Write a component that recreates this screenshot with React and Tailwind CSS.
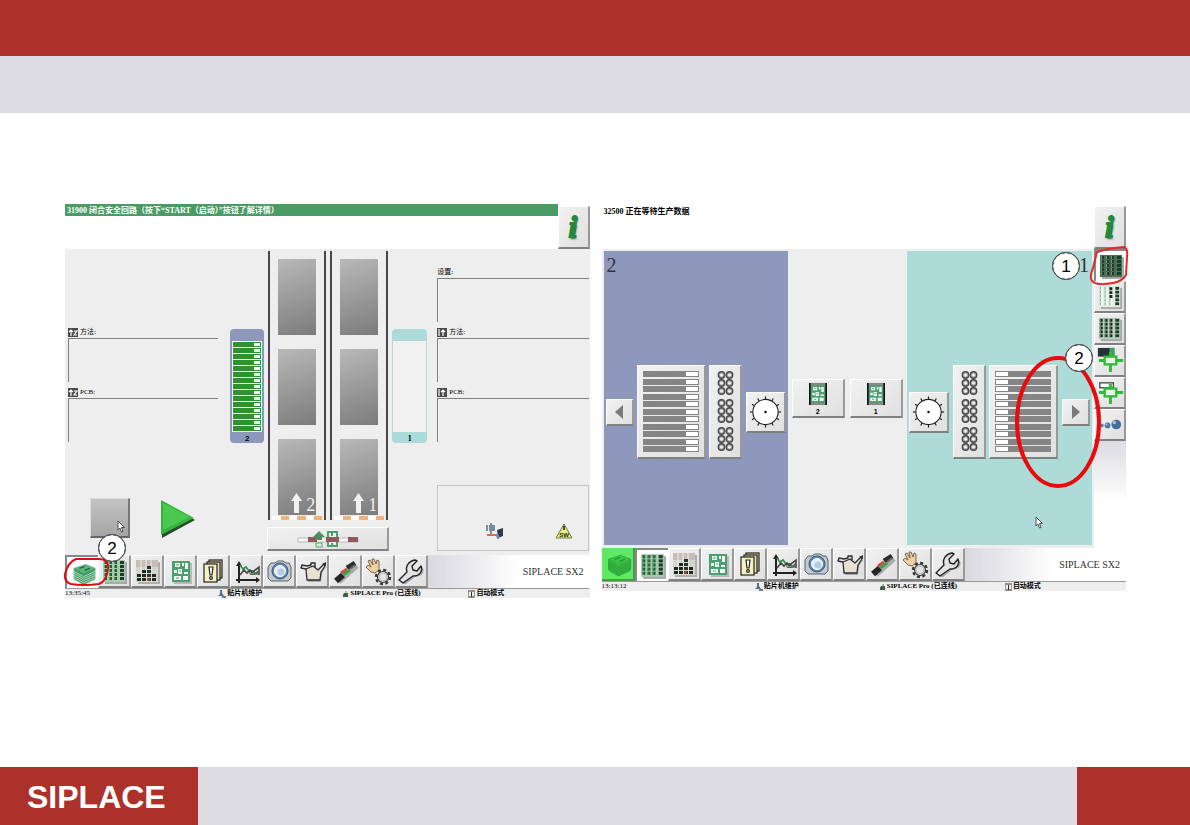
/* ---------- Toolbar icons ---------- */

function StackIcon({ active }) {
    return (
        <svg viewBox="1 1 30 30" className="size-full">
            {[20, 18, 16, 14, 12].map((y) => (
                <path
                    key={y}
                    d={`M7 ${y} L19 ${y - 4} L29 ${y} L28 ${y + 3} L17 ${y + 8} L8 ${y + 3} Z`}
                    fill={active ? "#34b440" : "#3f9b62"}
                    stroke={active ? "#2ba638" : "#c5e4cf"}
                    strokeWidth="0.8"
                />
            ))}
            <path d="M9 12 L19 8 L28 12 L17 17 Z" fill={active ? "#3dbf4a" : "#5fb27c"} />
            <path d="M13 12 l5 -2 M18 14 l5 -2" stroke={active ? "#239a31" : "#1f6b3c"} strokeWidth="1.4" />
        </svg>
    );
}

function GridIcon({ variant = "green" }) {
    const cols = [6, 11, 16];
    const rows = [6, 10, 14, 18, 22];
    const back = { green: "#a9c9ae", dark: "#4d6b56", light: "#e4ebe4", mono: "#b7cfbc" }[variant];
    const cell = { green: "#245c35", dark: "#1f3b29", light: "#fff", mono: "#1d1d1d" }[variant];
    return (
        <svg viewBox="1 1 30 30" className="size-full">
            <rect x="7" y="7" width="22" height="22" fill="#a9a9a9" />
            <rect x="5" y="5" width="22" height="22" fill={back} />
            {cols.map((x) =>
                rows.map((y) => (
                    <g key={`${x}-${y}`}>
                        <rect x={x} y={y} width="3" height="3" fill={cell} />
                        <rect x={x} y={y} width="1" height="3" fill="#56a56b" />
                    </g>
                ))
            )}
            {rows.map((y) => (
                <rect key={y} x="22" y={y} width="4" height="3" fill="#173f25" />
            ))}
            {variant === "dark" && <path d="M15 6 v20" stroke="#6a3a38" />}
            {variant === "light" && <path d="M16 8 h3 M16 12 h3 M16 16 h3" stroke="#222" strokeWidth="3" />}
        </svg>
    );
}

function LevelsIcon() {
    const bars = [
        [6, 2],
        [11, 3],
        [16, 1],
        [21, 2],
    ];
    return (
        <svg viewBox="1 1 30 30" className="size-full">
            <rect x="7" y="7" width="22" height="22" fill="#b0b0b0" />
            <rect x="5" y="5" width="22" height="22" fill="#d3d6d0" />
            <rect x="5" y="5" width="22" height="7" fill="#c9bdb8" />
            <path d="M10 5 v22 M15 5 v22 M20 5 v22" stroke="#efefef" />
            {bars.map(([x, n]) =>
                Array.from({ length: n }, (_, i) => (
                    <rect key={`${x}-${i}`} x={x} y={23 - i * 4} width="4" height="3" fill="#1c2a20" />
                ))
            )}
            <rect x="16" y="11" width="4" height="11" fill="#26342a" />
            <path d="M16 14.500 h4 M16 18.500 h4" stroke="#d3d6d0" />
            <rect x="16" y="23" width="3" height="3" fill="#8d4747" />
        </svg>
    );
}

function BoardShape() {
    return (
        <g>
            <rect x="8" y="6" width="18" height="21" fill="#4aa070" />
            <g fill="#f3faf5">
                <rect x="11" y="8" width="5" height="4" />
                <rect x="18" y="8" width="2" height="3" />
                <rect x="21" y="8" width="3" height="6" />
                <rect x="10" y="15" width="3" height="3" />
                <rect x="14" y="14" width="4" height="5" />
                <rect x="20" y="17" width="4" height="2" />
                <rect x="10" y="21" width="7" height="4" />
                <rect x="19" y="21" width="5" height="4" />
            </g>
            <path d="M12 10 h3 M15 16 h2 M12 23 h3" stroke="#4aa070" />
        </g>
    );
}

function BoardIcon() {
    return (
        <svg viewBox="1 1 30 30" className="size-full">
            <rect x="10" y="8" width="18" height="21" fill="#b9b9b9" />
            <BoardShape />
        </svg>
    );
}

function AlertCardsIcon() {
    return (
        <svg viewBox="1 1 30 30" className="size-full" stroke="#222" strokeWidth="1.2">
            <rect x="12" y="5" width="13" height="18" fill="#ddd9a8" />
            <rect x="10" y="7" width="13" height="18" fill="#e8e4b4" />
            <rect x="7" y="9" width="13" height="18" fill="#f6f2c0" />
            <path d="M12 12 h4 l-1 8 h-2 Z" fill="#fff" />
            <circle cx="14" cy="23" r="1.4" fill="#fff" />
        </svg>
    );
}

function TrendIcon() {
    return (
        <svg viewBox="1 1 30 30" className="size-full" fill="none">
            <path d="M9 28 V8 M6 25 H28" stroke="#222" strokeWidth="2" />
            <path d="M6 11 L9 6 L12 11 Z M26 22 L30 25 L26 28 Z" fill="#222" />
            <path d="M10 10 l3 4 3-2 3 4 4 0 2 2 4 1" stroke="#3d8d53" strokeWidth="1.8" />
            <path d="M10 20 l4-5 3 3 3-3 2 3 3-3 4-3 0 8" stroke="#444" strokeWidth="1.6" />
            <path d="M18 15 l3 4 4-1 3-3 1 4 -4 1 -5 0 Z" fill="#58685c" />
        </svg>
    );
}

function CameraIcon() {
    return (
        <svg viewBox="1 1 30 30" className="size-full">
            <path d="M5 12 L8 8 H12 L15 6 H20 L23 8 H26 L28 12 V23 L25 26 H8 L5 23 Z" fill="#c4c9cd" stroke="#59636c" />
            <circle cx="17" cy="16" r="8" fill="#5d89b4" stroke="#3f5b78" />
            <circle cx="17" cy="16" r="5.5" fill="#e3edf5" stroke="#fff" />
            <circle cx="18" cy="17" r="3.5" fill="#b4cce1" />
        </svg>
    );
}

function OilCanIcon() {
    return (
        <svg viewBox="1 1 30 30" className="size-full" strokeLinejoin="round">
            <path d="M11 16 L18 13 L23 17 L28 12 L30 12 L26 18 L25 27 H12 Z" fill="#aaa" />
            <path d="M10 14 L17 11 L22 15 L28 9 L29 11 L25 17 L24 25 H11 Z" fill="#e5e1d3" stroke="#2c2c2c" strokeWidth="1.3" />
            <path d="M10 14 L5 13 L6 10 L11 11 L15 10 V8 H19 V12" fill="none" stroke="#2c2c2c" strokeWidth="1.4" />
            <path d="M26 9 l4 -2 0 4 Z" fill="#2c2c2c" />
        </svg>
    );
}

function FeederIcon() {
    return (
        <svg viewBox="1 1 30 30" className="size-full" fill="none">
            <path d="M10 27 L28 11" stroke="#aaa" strokeWidth="5" />
            <path d="M7 26 L14 20" stroke="#252525" strokeWidth="6" />
            <path d="M18 13 L26 8" stroke="#2d2d2d" strokeWidth="5" />
            <path d="M12 18 L18 14" stroke="#d24a40" strokeWidth="3" />
            <path d="M14 20 L21 15" stroke="#3da048" strokeWidth="3" />
            <path d="M21 14 L26 10" stroke="#666" strokeWidth="2" />
        </svg>
    );
}

function HandGearIcon() {
    return (
        <svg viewBox="1 1 30 30" className="size-full">
            <path
                d="M9 17 L4 12 L6 10 L9 12 L6 6 L8 5 L11 10 L10 4 L12 4 L14 9 L15 5 L17 6 L17 15 L13 18 Z"
                fill="#efd0a4"
                stroke="#5e4a31"
                strokeWidth="0.8"
            />
            <circle cx="21" cy="22" r="7" fill="none" stroke="#333" strokeWidth="2.400" strokeDasharray="3 2.500" />
            <circle cx="21" cy="22" r="5.5" fill="#ececec" stroke="#333" strokeWidth="1.2" />
            <circle cx="21" cy="22" r="4" fill="#e2e2e2" stroke="#999" strokeWidth="0.6" />
        </svg>
    );
}

function WrenchIcon() {
    return (
        <svg viewBox="1 1 30 30" className="size-full" strokeLinejoin="round">
            <path d="M9 29 L6 27 L13 18 L19 22 L28 13 C30 18 26 22 20 22 L11 29 Z" fill="#aaa" />
            <path
                d="M8 28 L4 25 L12 17 C10 11 14 6 20 5 L22 6 L17 11 L18 15 L22 16 L26 11 C28 16 25 21 18 21 Z"
                fill="#e3e3e3"
                stroke="#222"
                strokeWidth="1.4"
            />
        </svg>
    );
}

function NozzleIcon({ filled }) {
    return (
        <svg viewBox="1 1 30 30" className="size-full" fill="none">
            {filled ? (
                <g>
                    <rect x="4" y="3" width="17" height="9" fill="#26303a" />
                    <rect x="16" y="3" width="5" height="9" fill="#3fa25a" />
                </g>
            ) : (
                <rect x="6" y="6" width="14" height="5" fill="#fff" stroke="#555" strokeWidth="1.5" />
            )}
            <path d="M17 7 V13 M17 20 V28 M5 16 H12 M22 16 H30" stroke="#2fbb3b" strokeWidth="3" />
            <rect x="11" y="12" width="12" height="8" fill="#e9f5ea" stroke="#2fbb3b" strokeWidth="2.4" />
        </svg>
    );
}

function BallsIcon() {
    return (
        <svg viewBox="1 1 30 30" className="size-full">
            <circle cx="8" cy="17" r="2" fill="#5a7fa6" />
            <circle cx="14" cy="17" r="3" fill="#51799f" />
            <circle cx="23" cy="16" r="5" fill="#466f99" />
            <circle cx="21" cy="14" r="1.8" fill="#a9c4dd" />
            <circle cx="13" cy="16" r="1" fill="#a9c4dd" />
        </svg>
    );
}

function Pointer({ className = "" }) {
    return (
        <svg viewBox="0 0 8 13" className={`h-[13px] w-2 ${className}`}>
            <path
                d="M1 1 V10 L3 8 L4.500 12 L6 11.500 L4.500 7.500 H7.500 Z"
                fill="#fff"
                stroke="#444"
                strokeWidth="0.9"
            />
        </svg>
    );
}

/* ---------- Shared screen parts ---------- */

const raised =
    "border-t border-l border-r-2 border-b-2 border-t-white border-l-white border-r-[#999] border-b-[#808080] bg-linear-to-br from-[#f1f1f2] to-[#e0e0e1]";

function InfoButton() {
    return (
        <button
            type="button"
            className={`mt-[2px] flex h-[43px] w-8 shrink-0 items-center justify-center ${raised}`}
        >
            <span className="font-['Liberation_Serif',serif] text-[30px] leading-8 font-bold text-[#218a3b] italic [-webkit-text-stroke:2px_#218a3b] [text-shadow:1px_2px_2px_#444]">
                i
            </span>
        </button>
    );
}

const tools = [
    { name: "Production", Icon: StackIcon },
    { name: "Setup", Icon: GridIcon },
    { name: "Levels", Icon: LevelsIcon },
    { name: "Board", Icon: BoardIcon },
    { name: "Messages", Icon: AlertCardsIcon },
    { name: "Statistics", Icon: TrendIcon },
    { name: "Vision", Icon: CameraIcon },
    { name: "Service", Icon: OilCanIcon },
    { name: "Feeder", Icon: FeederIcon },
    { name: "Manual", Icon: HandGearIcon },
    { name: "Tools", Icon: WrenchIcon },
];

function Toolbar({ selected, running }) {
    return (
        <div className="flex h-[33px] bg-[#eee]">
            {tools.map(({ name, Icon }, index) => (
                <button
                    key={name}
                    type="button"
                    aria-label={name}
                    className={`w-[33px] shrink-0 ${
                        index === 0 && running
                            ? "border-r-2 border-b-2 border-[#4a9a4e] bg-[#5fe863]"
                            : index === selected
                            ? "border-t-2 border-l-2 border-[#888] bg-white"
                            : raised
                    }`}
                >
                    {index === 0 ? <Icon active={running} /> : <Icon />}
                </button>
            ))}
            <div className="flex flex-1 items-center justify-end bg-linear-to-r from-[#d8d8de] to-white to-55% pr-[6px] font-['Liberation_Serif',serif] text-[10px] text-[#333]">
                SIPLACE SX2
            </div>
        </div>
    );
}

function StatusBar({ time }) {
    const cell = "flex items-center gap-px border-t border-[#999] pl-[2px] font-bold whitespace-nowrap";
    return (
        <div className="grid h-[10px] grid-cols-[150fr_126fr_125fr_123fr] bg-[#eee] font-['Liberation_Serif','Noto_Sans_CJK_SC',serif] text-[7px] leading-[9px] text-black">
            <span className="border-t border-[#999]">{time}</span>
            <span className={cell}>
                <svg viewBox="0 0 9 8" className="h-2 w-[9px]">
                    <path d="M3 0 h2 v3 l2 3 h-6 l2 -2 Z" fill="#48708f" />
                    <path d="M5 6 h4 v2 h-4 Z" fill="#777" />
                </svg>
                贴片机维护
            </span>
            <span className={cell}>
                <svg viewBox="0 0 6 8" className="h-2 w-[6px]">
                    <path d="M1 3 h4 v4 h-5 v-2 Z" fill="#40584a" />
                    <path d="M3 1 v3" stroke="#39945a" />
                </svg>
                SIPLACE Pro (已连线)
            </span>
            <span className={cell}>
                <svg viewBox="0 0 7 8" className="h-2 w-[7px]" fill="none" stroke="#333">
                    <path d="M0 1 h7 M3.500 2 v5 M1 7 h5" />
                    <path d="M0.500 2 v6 M6.500 2 v6" stroke="#999" />
                </svg>
                自动模式
            </span>
        </div>
    );
}

function Marker({ children, className }) {
    return (
        <span
            className={`absolute flex size-7 items-center justify-center rounded-full border border-black bg-white font-['Liberation_Sans',sans-serif] text-[17px] leading-none text-black outline-1 -outline-offset-1 outline-[#666] ${className}`}
        >
            {children}
        </span>
    );
}

/* ---------- Overview screen ---------- */

function Field({ label, lane }) {
    return (
        <div>
            <div className="flex h-3 items-center gap-[2px] font-['Liberation_Serif','Noto_Sans_CJK_SC',serif] text-[7px] leading-3 text-black">
                {lane && (
                    <svg viewBox="0 0 10 9" className="h-[9px] w-[10px]">
                        <rect width="10" height="9" fill="#4a4a4a" />
                        {lane === 2 ? (
                            <g fill="none" stroke="#fff" strokeWidth="1.2">
                                <path d="M3 8 V2 M1 4 L3 2 L5 4" />
                                <path d="M6 3 h3 L6 7 h3" />
                            </g>
                        ) : (
                            <g fill="none" stroke="#fff" strokeWidth="1.2">
                                <path d="M2 1 v7 M6 8 V2 M4 4 L6 2 L8 4" />
                            </g>
                        )}
                    </svg>
                )}
                <span>{label}</span>
            </div>
            <div className="h-11 border-t border-l border-[#808080]" />
        </div>
    );
}

function Lane({ number }) {
    const block = "h-[76px] w-[38px] bg-linear-160 from-[#b9b9b9] to-[#7c7c7c]";
    return (
        <div className="flex w-[58px] flex-col items-center border-x-2 border-[#484848] pt-2">
            <div className="flex flex-col gap-[14px]">
                <div className={block} />
                <div className={block} />
                <div className={`flex items-end justify-end gap-1 pr-px pb-[2px] ${block}`}>
                    <svg viewBox="0 0 11 20" className="h-5 w-[11px]">
                        <path d="M5.5 0 L11 8 H8 V20 H3 V8 H0 Z" fill="#f1f1f1" />
                    </svg>
                    <span className="font-['Liberation_Serif',serif] text-[18px] leading-[16px] text-[#eee]">
                        {number}
                    </span>
                </div>
            </div>
            <div className="mt-px flex h-1 w-full px-[2px]">
                {[0, 1, 2].map((n) => (
                    <div key={n} className="flex flex-1">
                        <span className="flex-1 bg-white" />
                        <span className="flex-1 bg-[#f0b377]" />
                    </div>
                ))}
            </div>
        </div>
    );
}

function OverviewScreen() {
    return (
        <section className="relative">
            <div className="flex h-[45px] items-start">
                <div className="h-3 flex-1 bg-[#4a9c64] pl-[2px] font-['Liberation_Serif','Noto_Sans_CJK_SC',serif] text-[8px] leading-[14px] font-bold whitespace-nowrap text-white">
                    31900 闭合安全回路（按下“START（启动）”按钮了解详情）
                </div>
                <InfoButton />
            </div>

            <div className="grid h-[306px] grid-cols-[165fr_34px_128px_35px_162fr] bg-[#eee]">
                {/* Lane 2 data and start / stop */}
                <div className="flex flex-col gap-1 pt-[77px] pr-3 pl-[3px]">
                    <Field label="方法:" lane={2} />
                    <Field label="PCB:" lane={2} />
                    <div className="mt-[52px] ml-[22px] flex gap-[30px]">
                        <button
                            type="button"
                            aria-label="Stop"
                            className="flex size-10 items-end justify-end border-t border-l border-r-2 border-b-2 border-t-[#ddd] border-l-[#ddd] border-r-[#777] border-b-[#666] bg-linear-to-b from-[#c4c4c4] to-[#a5a5a5] pr-[3px] pb-[3px]"
                        >
                            <Pointer />
                        </button>
                        <button type="button" aria-label="Start" className="h-10 w-9">
                            <svg viewBox="0 0 36 40" className="size-full">
                                <path d="M2 4 L35 22 L2 40 Z" fill="#274d2a" />
                                <path d="M1 2 L34 20 L1 37 Z" fill="#36b43e" />
                                <path d="M3 5 L30 19 L3 32 Z" fill="#49c94d" />
                            </svg>
                        </button>
                    </div>
                </div>

                {/* Location 2 */}
                <div className="mt-20 h-[114px] rounded-[4px] bg-[#8e98bd] px-[2px] pt-3">
                    <div className="h-[91px] bg-white px-px">
                        {Array.from({ length: 15 }, (_, i) => (
                            <div key={i} className="flex h-[6px] items-center border-t border-white bg-[#2c932f] pr-px">
                                <span className="ml-auto h-[3px] w-[6px] bg-[#f2f8f2]" />
                            </div>
                        ))}
                    </div>
                    <div className="text-center font-['Liberation_Sans',sans-serif] text-[8px] leading-[14px] font-bold">2</div>
                </div>

                {/* Conveyor */}
                <div className="px-[3px] pt-[2px]">
                    <div className="flex justify-between px-[1px]">
                        <Lane number="2" />
                        <Lane number="1" />
                    </div>
                    <button
                        type="button"
                        aria-label="Conveyor"
                        className={`mt-[7px] flex h-6 w-full items-center justify-center ${raised}`}
                    >
                        <svg viewBox="0 0 62 18" className="h-[18px] w-[62px]">
                            <rect x="1" y="8" width="60" height="4" fill="#f6f6f6" stroke="#999" strokeWidth="0.6" />
                            <rect x="11" y="7" width="9" height="5" fill="#92595b" />
                            <rect x="51" y="7" width="10" height="5" fill="#92595b" />
                            <path d="M22 1 L28 7 H25 V10 H19 V7 H16 Z" fill="#4f8d62" />
                            <rect x="19" y="13" width="6" height="4" fill="#d6ecda" stroke="#62a676" />
                            <rect x="31" y="2" width="9" height="14" fill="#e9f4ec" stroke="#4da06a" strokeWidth="2" />
                            <rect x="29" y="7" width="13" height="5" fill="#92595b" />
                            <path d="M35 3 v3 M35 13 v3" stroke="#4da06a" strokeWidth="2" />
                        </svg>
                    </button>
                </div>

                {/* Location 1 */}
                <div className="mt-20 h-[114px] rounded-[4px] bg-[#addbd8] px-[1px] pt-3">
                    <div className="h-[91px] bg-[#f0f0f0]" />
                    <div className="text-center font-['Liberation_Serif',serif] text-[8px] leading-[14px] font-bold">1</div>
                </div>

                {/* Lane 1 data */}
                <div className="flex flex-col gap-1 pt-[17px] pr-px pl-[10px]">
                    <Field label="设置:" />
                    <Field label="方法:" lane={1} />
                    <Field label="PCB:" lane={1} />
                    <div className="mt-[39px] flex h-[66px] items-end justify-end gap-[51px] border border-[#c6c6c6] pr-[15px] pb-[11px]">
                        <svg viewBox="0 0 18 16" className="h-4 w-[18px]">
                            <path d="M5 0 v12 M1 2 v6 M8 2 v6" stroke="#4c6772" strokeWidth="1.4" />
                            <rect x="3" y="2" width="4" height="6" fill="#6e9292" />
                            <path d="M1 12 h10" stroke="#d3714c" strokeWidth="2" />
                            <path d="M11 7 l6 -2 v8 l-5 2 Z" fill="#2d3e52" />
                            <path d="M10 12 h3 v4 h-2 Z" fill="#668db3" />
                        </svg>
                        <svg viewBox="0 0 18 16" className="h-4 w-[18px]">
                            <path d="M9 1 L17 15 H1 Z" fill="#e6ee86" stroke="#6f7b34" />
                            <path d="M9 3 v4" stroke="#222" strokeWidth="1.6" />
                            <text x="9" y="14" textAnchor="middle" fontSize="6" fontWeight="bold" fontFamily="Liberation Sans" fill="#222">
                                SW
                            </text>
                        </svg>
                    </div>
                </div>
            </div>

            <Toolbar selected={0} />
            <StatusBar time="13:35:45" />

            <svg viewBox="0 0 48 30" className="absolute top-[353px] left-[-2px] h-[30px] w-12" fill="none">
                <path
                    d="M13 2 H36 Q46 2 45 11 Q44 24 36 27 Q20 29 8 27 Q1 25 2 17 Q5 5 13 2 Z"
                    stroke="#e00b12"
                    strokeWidth="2"
                />
            </svg>
            <Marker className="top-[330px] left-[33px]">2</Marker>
        </section>
    );
}

/* ---------- Setup screen ---------- */

function FeederTable({ mirrored }) {
    return (
        <button
            type="button"
            aria-label="Feeder table"
            className={`flex h-[94px] w-[69px] shrink-0 flex-col justify-between p-[5px] ${raised}`}
        >
            {Array.from({ length: 11 }, (_, i) => (
                <span
                    key={i}
                    className={`flex h-[6px] w-full bg-[#858585] p-px ${mirrored ? "justify-start" : "justify-end"}`}
                >
                    <span className="h-full w-3 bg-white" />
                </span>
            ))}
        </button>
    );
}

function NozzleChanger() {
    return (
        <button type="button" aria-label="Nozzle changer" className={`h-[94px] w-[33px] shrink-0 ${raised}`}>
            <svg viewBox="1 1 30 91" className="size-full">
                {[0, 28, 56].map((dy) =>
                    [10, 18, 26].map((y) =>
                        [12.5, 20.5].map((x) => (
                            <g key={`${dy}-${y}-${x}`}>
                                <circle cx={x} cy={y + dy} r="3.2" fill="#a8a8a8" stroke="#4a4a4a" strokeWidth="1.4" />
                                <circle cx={x} cy={y + dy} r="1.5" fill="#f1f1f1" />
                            </g>
                        ))
                    )
                )}
            </svg>
        </button>
    );
}

function Head() {
    return (
        <button type="button" aria-label="Head" className={`h-[41px] w-10 shrink-0 ${raised}`}>
            <svg viewBox="0 0 38 38" className="size-full">
                {Array.from({ length: 12 }, (_, i) => (
                    <path key={i} d="M19 3 V7" stroke="#222" strokeWidth="1.2" transform={`rotate(${i * 30} 19 19)`} />
                ))}
                <circle cx="19" cy="19" r="13" fill="#fff" stroke="#222" strokeWidth="1.1" />
                <circle cx="19" cy="19" r="1.3" fill="#111" />
            </svg>
        </button>
    );
}

function ArrowButton({ mirrored }) {
    return (
        <button
            type="button"
            aria-label={mirrored ? "Next" : "Previous"}
            className={`flex h-[27px] w-7 shrink-0 items-center justify-center ${raised}`}
        >
            <svg viewBox="0 0 8 14" className="h-[14px] w-2">
                <path d={mirrored ? "M0 0 L8 7 L0 14 Z" : "M8 0 L0 7 L8 14 Z"} fill="#7a7a7a" />
            </svg>
        </button>
    );
}

function Sector({ number, mirrored }) {
    return (
        <div className={`flex flex-col ${mirrored ? "bg-[#addbd8]" : "bg-[#8e98bd]"}`}>
            <div
                className={`h-7 px-[3px] font-['Liberation_Serif',serif] text-[20px] leading-7 text-[#333] ${
                    mirrored ? "text-right" : ""
                }`}
            >
                {number}
            </div>
            <div className={`flex flex-1 items-center justify-between px-[2px] ${mirrored ? "flex-row-reverse" : ""}`}>
                <ArrowButton mirrored={mirrored} />
                <FeederTable mirrored={mirrored} />
                <NozzleChanger />
                <Head />
            </div>
        </div>
    );
}

function ConveyorButton({ number }) {
    return (
        <button
            type="button"
            className={`flex h-[39px] w-[53px] flex-col items-center gap-[2px] pt-[2px] font-['Liberation_Sans',sans-serif] text-[7px] leading-2 font-bold ${raised}`}
        >
            <svg viewBox="6 3 22 27" className="h-6 w-[18px]">
                <rect x="6" y="3" width="22" height="27" fill="#888" />
                <BoardShape />
                <path d="M7 3 V30 M27 3 V30" stroke="#111" strokeWidth="2" />
            </svg>
            {number}
        </button>
    );
}

function SetupScreen() {
    const views = [
        { name: "All tracks", icon: <GridIcon variant="dark" /> },
        { name: "Empty tracks", icon: <GridIcon variant="light" /> },
        { name: "Used tracks", icon: <GridIcon variant="mono" /> },
        { name: "Nozzle setup", icon: <NozzleIcon filled /> },
        { name: "Nozzle empty", icon: <NozzleIcon /> },
        { name: "Components", icon: <BallsIcon /> },
    ];

    return (
        <section className="relative">
            <div className="flex h-[344px]">
                <div className="flex flex-1 flex-col">
                    <div className="h-[45px] pt-[2px] pl-[2px] font-['Liberation_Serif','Noto_Sans_CJK_SC',serif] text-[8px] leading-3 font-bold text-black">
                        32500 正在等待生产数据
                    </div>
                    <div className="grid flex-1 grid-cols-[184fr_119fr_185fr] bg-[#eee] px-[2px] pt-[2px] pb-[3px]">
                        <Sector number="2" />
                        <div className="flex items-center justify-between px-1">
                            <ConveyorButton number="2" />
                            <ConveyorButton number="1" />
                        </div>
                        <Sector number="1" mirrored />
                    </div>
                </div>

                {/* View selection */}
                <div className="flex w-8 shrink-0 flex-col">
                    <InfoButton />
                    {views.map((view, index) => (
                        <button
                            key={view.name}
                            type="button"
                            aria-label={view.name}
                            className={`size-8 shrink-0 ${
                                index === 0 ? "border-t-2 border-l-2 border-[#888] bg-white" : raised
                            }`}
                        >
                            {view.icon}
                        </button>
                    ))}
                    <div className="h-[60px] bg-linear-to-b from-[#dcdce1] to-white" />
                </div>
            </div>

            <Toolbar selected={1} running />
            <StatusBar time="13:13:12" />

            <svg viewBox="0 0 40 42" className="absolute top-[41px] right-[-3px] h-[42px] w-10" fill="none">
                <path
                    d="M8 7 Q20 3 35 2 Q39 3 38 12 L37 30 Q34 36 24 38 Q8 41 3 36 Q0 32 4 23 Z"
                    stroke="#e8262b"
                    strokeWidth="2"
                />
            </svg>
            <svg viewBox="0 0 88 134" className="absolute top-[151px] right-[24px] h-[134px] w-[88px]" fill="none">
                <ellipse cx="44" cy="67" rx="41" ry="64" stroke="#e90a0c" strokeWidth="4" />
            </svg>
            <Pointer className="absolute top-[312px] right-[83px]" />
            <Marker className="top-[48px] right-[46px]">1</Marker>
            <Marker className="top-[140px] right-[33px]">2</Marker>
        </section>
    );
}

export default function App() {
    return (
        <div className="flex min-h-screen flex-col bg-white">
            <header>
                <div className="h-14 bg-[#ad312b]" />
                <div className="h-[57px] bg-[#dcdce1]" />
            </header>

            <main className="grid flex-1 grid-cols-2 items-start gap-3 pt-[91px] pr-16 pb-10 pl-[65px]">
                <OverviewScreen />
                <SetupScreen />
            </main>

            <footer className="flex h-[58px] bg-[#dcdce1]">
                <div className="flex w-[198px] items-center bg-[#ad312b] pt-[2px] pl-[27px] font-['Liberation_Sans',sans-serif] text-[32px] leading-none font-bold text-white">
                    SIPLACE
                </div>
                <div className="ml-auto w-[113px] bg-[#ad312b]" />
            </footer>
        </div>
    );
}
